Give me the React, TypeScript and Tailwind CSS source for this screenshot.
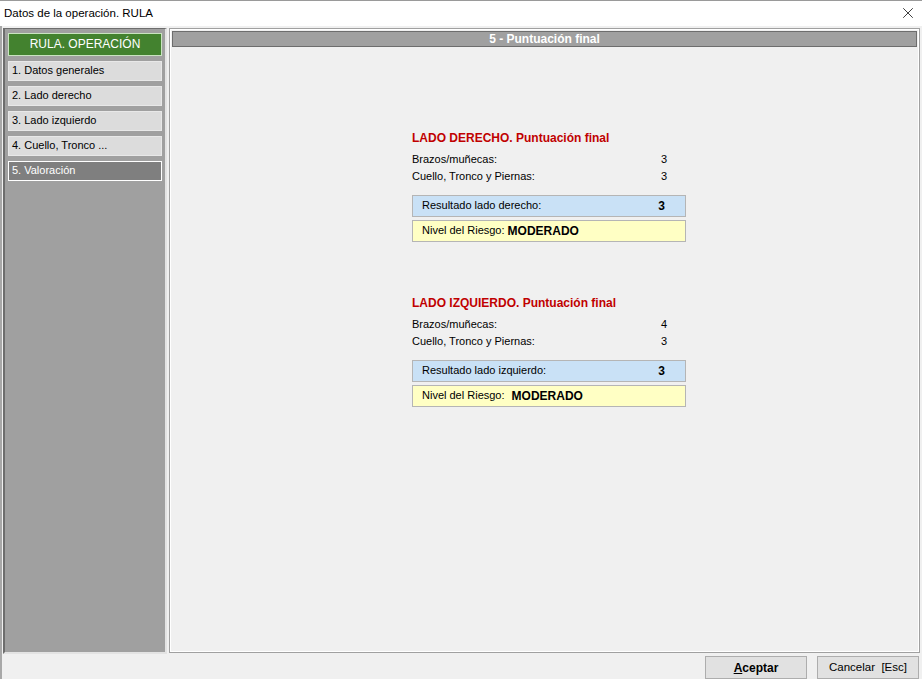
import { X } from 'lucide-react';

const navItems = ['1. Datos generales', '2. Lado derecho', '3. Lado izquierdo', '4. Cuello, Tronco ...'];

type Side = {
  title: string;
  brazos: string;
  cuello: string;
  resultLabel: string;
  result: string;
  riskGap: string;
};

const sides: Side[] = [
  { title: 'LADO DERECHO. Puntuación final', brazos: '3', cuello: '3', resultLabel: 'Resultado lado derecho:', result: '3', riskGap: 'ml-[3px]' },
  { title: 'LADO IZQUIERDO. Puntuación final', brazos: '4', cuello: '3', resultLabel: 'Resultado lado izquierdo:', result: '3', riskGap: 'ml-[7px]' },
];

function ScoreBlock({ side }: { side: Side }) {
  return (
    <div className="w-[274px] flex flex-col">
      <div className="text-[12px] font-bold text-[#c00000] leading-[16px]">{side.title}</div>
      <div className="mt-[5px] flex flex-col text-[11px] leading-[17px] text-black">
        <div className="flex justify-between pr-[19px]">
          <span>Brazos/muñecas:</span>
          <span>{side.brazos}</span>
        </div>
        <div className="flex justify-between pr-[19px]">
          <span>Cuello, Tronco y Piernas:</span>
          <span>{side.cuello}</span>
        </div>
      </div>
      <div className="mt-[10px] h-[22px] flex items-center justify-between pl-[9px] pr-[20px] bg-[#c9e1f6] border border-[#b5b5b5] text-[11px]">
        <span>{side.resultLabel}</span>
        <span className="font-bold text-[12px]">{side.result}</span>
      </div>
      <div className="mt-[3px] h-[22px] flex items-center pl-[9px] bg-[#ffffc4] border border-[#b5b5b5] text-[11px]">
        <span>Nivel del Riesgo:</span>
        <span className={`${side.riskGap} font-bold text-[12px]`}>MODERADO</span>
      </div>
    </div>
  );
}

export default function App() {
  return (
    <div
      className="w-[922px] h-[679px] flex flex-col bg-[#f0f0f0] text-black overflow-hidden"
      style={{ fontFamily: '"Liberation Sans", Arial, sans-serif' }}
    >
      {/* Title bar */}
      <div className="h-[26px] bg-white flex items-center justify-between pl-[4px] pr-[5px] border-t border-[#9a9a9a]">
        <span className="text-[11.5px]">Datos de la operación. RULA</span>
        <X size={18} strokeWidth={1} className="text-black" />
      </div>

      {/* Body */}
      <div className="flex-1 flex border-l-2 border-[#a8a8a8] pl-[1px] pr-[1px] pt-[2px]">
        {/* Sidebar */}
        <div className="w-[164px] h-[626px] bg-[#a0a0a0] border-t border-l-2 border-t-[#6d6d6d] border-l-[#6d6d6d] border-r-2 border-b-2 border-r-[#e3e3e3] border-b-[#e3e3e3] pt-[4px] pl-[3px] flex flex-col gap-[5px]">
          <div className="w-[154px] h-[23px] bg-[#43822f] border border-[#c9e4c0] flex items-center justify-center text-white text-[12px]">
            RULA. OPERACIÓN
          </div>
          {navItems.map((item) => (
            <div
              key={item}
              className="w-[154px] h-[20px] bg-[#dcdcdc] border border-[#e8e8e8] flex items-center pl-[3px] text-[11px]"
            >
              {item}
            </div>
          ))}
          <div className="w-[154px] h-[20px] bg-[#7f7f7f] border border-white flex items-center pl-[3px] text-[11px] text-white">
            5. Valoración
          </div>
        </div>

        {/* Main panel */}
        <div className="ml-[2px] w-[751px] h-[625px] border border-[#a0a0a0] bg-[#f0f0f0] flex flex-col">
          <div className="border border-white flex-1 flex flex-col p-[1px]">
            <div className="h-[16px] bg-[#a0a0a0] border border-[#6d6d6d] flex items-center justify-center text-white font-bold text-[12px]">
              5 - Puntuación final
            </div>
            <div className="flex flex-col pl-[240px] pt-[83px] gap-[53px]">
              {sides.map((s) => (
                <ScoreBlock key={s.title} side={s} />
              ))}
            </div>
          </div>
        </div>
      </div>

      {/* Buttons */}
      <div className="h-[26px] flex justify-end items-end gap-[10px] pr-[3px] border-l-2 border-[#a8a8a8]">
        <button className="w-[102px] h-[23px] bg-[#e1e1e1] border border-[#adadad] text-[12px] font-bold">
          <span className="underline">A</span>ceptar
        </button>
        <button className="w-[102px] h-[23px] bg-[#e1e1e1] border border-[#adadad] text-[11.5px]">
          Cancelar&nbsp;&nbsp;[Esc]
        </button>
      </div>
    </div>
  );
}
